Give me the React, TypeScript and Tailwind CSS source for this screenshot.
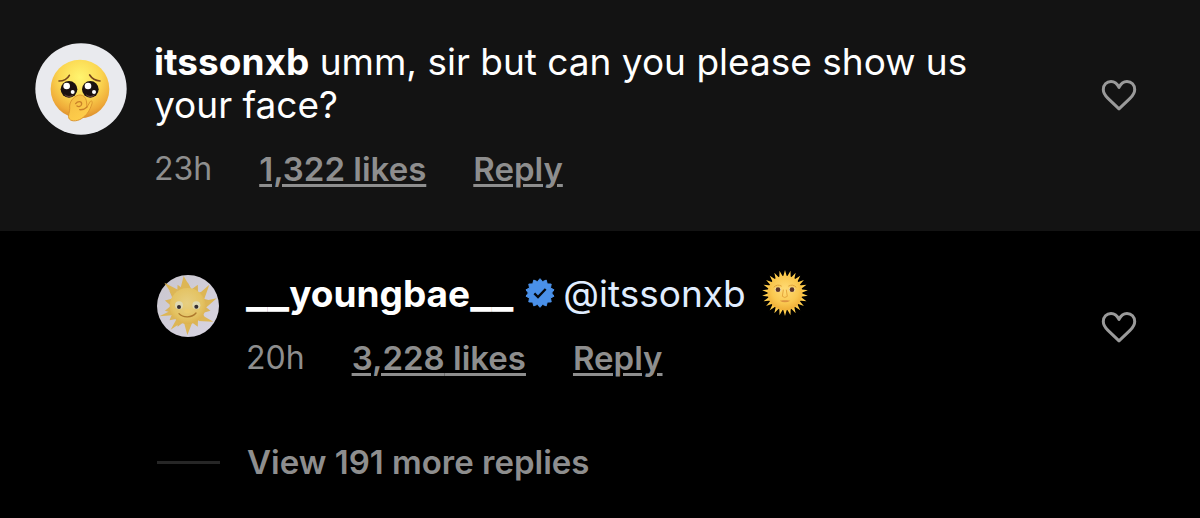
import type { ReactNode } from 'react'

// points of a star with n tips, for rays and the badge edge
function starPoints(n: number, cx: number, cy: number, outer: number, inner: number) {
  const pts: string[] = []
  for (let i = 0; i < n * 2; i++) {
    const r = i % 2 ? inner : outer
    const a = (Math.PI * i) / n - Math.PI / 2
    pts.push(`${(cx + r * Math.cos(a)).toFixed(2)},${(cy + r * Math.sin(a)).toFixed(2)}`)
  }
  return pts.join(' ')
}

function PleadingAvatar() {
  return (
    <svg viewBox="0 0 276 276" className="size-[92px] shrink-0" role="img" aria-label="itssonxb">
      <defs>
        <radialGradient id="face" cx="0.5" cy="0.3" r="0.72">
          <stop offset="0" stopColor="#fff56f" />
          <stop offset="0.5" stopColor="#fbd650" />
          <stop offset="0.82" stopColor="#efab39" />
          <stop offset="1" stopColor="#d98a2b" />
        </radialGradient>
        <linearGradient id="hand" x1="0" y1="0" x2="0.6" y2="1">
          <stop offset="0" stopColor="#f3bb42" />
          <stop offset="1" stopColor="#ffcf4c" />
        </linearGradient>
      </defs>
      <circle cx="138" cy="138" r="137" fill="#e9eaee" />
      <circle cx="135" cy="138" r="88" fill="url(#face)" />
      <path d="M72 114c14 0 25-6 31-17M195 114c-15-1-24-7-31-18" fill="none" stroke="#79471c" strokeWidth="5" strokeLinecap="round" />
      <circle cx="102" cy="139" r="25" fill="#1b1110" />
      <circle cx="166" cy="139" r="25" fill="#1b1110" />
      <path d="M88 153q14 12 28 0q-4 10-14 10t-14-10M152 153q14 12 28 0q-4 10-14 10t-14-10" fill="#654039" />
      <circle cx="95" cy="129" r="10" fill="#fff" />
      <circle cx="159" cy="129" r="10" fill="#fff" />
      <circle cx="113" cy="147" r="6" fill="#fff" />
      <circle cx="177" cy="147" r="6" fill="#fff" />
      <path
        d="M104 189c1-17 17-34 32-33 9 0 16 7 18 17l2 19 9-15c4-7 8-2 6 5-7 21-14 31-25 40-14 13-36 15-43 6-7-10 3-20 1-39z"
        fill="url(#hand)"
        stroke="#dc962f"
        strokeWidth="3"
        strokeLinejoin="round"
      />
      <path d="M122 182c6-8 18-8 18 1-1 8-10 9-14 6M134 200c10 1 16-2 22-8" fill="none" stroke="#c98129" strokeWidth="4" strokeLinecap="round" />
    </svg>
  )
}

function SunAvatar() {
  return (
    <svg viewBox="0 0 186 186" className="size-[62px] shrink-0" role="img" aria-label="__youngbae__">
      <defs>
        <radialGradient id="plush" cx="0.48" cy="0.42" r="0.6">
          <stop offset="0" stopColor="#e7cf82" />
          <stop offset="0.7" stopColor="#e4c363" />
          <stop offset="1" stopColor="#dcb04d" />
        </radialGradient>
        <linearGradient id="wall" x1="0" y1="0" x2="1" y2="1">
          <stop offset="0" stopColor="#c9c6ce" />
          <stop offset="1" stopColor="#d9d5e2" />
        </linearGradient>
      </defs>
      <circle cx="93" cy="93" r="93" fill="url(#wall)" />
      <polygon points={starPoints(14, 92, 92, 70, 50)} fill="#dab45a" />
      <path d="M70 42L80 3l22 38zM48 62L22 23l42 22zM126 56l31-27-16 45zM141 78l38-8-34 30zM44 106L7 124l48-4zM134 120l35 20-45-2zM108 137l-17 43-11-41zM60 130l-19 34 34-23z" fill="#ddb655" />
      <circle cx="92" cy="93" r="54" fill="url(#plush)" />
      <circle cx="66" cy="91" r="12" fill="#dfd9b2" />
      <circle cx="118" cy="91" r="12" fill="#dfd9b2" />
      <circle cx="66" cy="96" r="6" fill="#342d32" />
      <circle cx="118" cy="95" r="6" fill="#342d32" />
      <path d="M66 116c12 13 39 13 51-2" fill="none" stroke="#ad782c" strokeWidth="4" strokeLinecap="round" />
      <ellipse cx="91" cy="109" rx="9" ry="6" fill="#eccb6c" />
    </svg>
  )
}

function SunFace() {
  return (
    <svg viewBox="0 0 138 138" className="size-[46px] shrink-0" role="img" aria-label="sun with face">
      <defs>
        <radialGradient id="sun" cx="0.5" cy="0.4" r="0.6">
          <stop offset="0" stopColor="#ffdc76" />
          <stop offset="0.65" stopColor="#fac850" />
          <stop offset="1" stopColor="#efae38" />
        </radialGradient>
      </defs>
      <polygon points={starPoints(26, 69, 69, 69, 48)} fill="#ffcd4c" />
      <circle cx="69" cy="69" r="52" fill="url(#sun)" />
      <path d="M36 51q10-10 22-3M80 48q12-7 22 3" fill="none" stroke="#dfa03a" strokeWidth="3" strokeLinecap="round" />
      <ellipse cx="48" cy="59" rx="10" ry="7" fill="#f5dca0" />
      <ellipse cx="90" cy="59" rx="10" ry="7" fill="#f5dca0" />
      <circle cx="48" cy="59" r="7" fill="#5a3226" />
      <circle cx="90" cy="59" r="7" fill="#5a3226" />
      <path d="M64 60l-3 19q7 7 15 0l-3-19" fill="none" stroke="#e5a63c" strokeWidth="3" strokeLinecap="round" />
      <path d="M53 92q16 10 32 0-7-2-16-1-9-1-16 1z" fill="#dc9340" />
    </svg>
  )
}

function VerifiedBadge() {
  return (
    <svg viewBox="0 0 90 90" className="size-[30px] shrink-0" role="img" aria-label="Verified">
      <polygon points={starPoints(14, 45, 45, 43, 35)} fill="#4a90e8" stroke="#4a90e8" strokeWidth="3" strokeLinejoin="round" />
      <path d="M28 46l11 11 23-24" fill="none" stroke="#05080d" strokeWidth="7" />
    </svg>
  )
}

function LikeButton() {
  return (
    <button type="button" aria-label="Like" className="block shrink-0">
      <svg viewBox="0 0 36 32" className="h-8 w-9" fill="none" stroke="#9a9a9a" strokeWidth="3" strokeLinejoin="round">
        <path d="M18 8.500C16.200 4.500 13.300 2.500 10 2.500C5.500 2.500 2.300 6 2.300 10.500C2.300 14.200 4.100 16.600 7 19.400L18 29.800L29 19.400C31.900 16.600 33.700 14.200 33.700 10.500C33.700 6 30.500 2.500 26 2.500C22.700 2.500 19.800 4.500 18 8.500Z" />
      </svg>
    </button>
  )
}

function Meta({ age, likes }: { age: string; likes: string }) {
  return (
    <div className="flex items-center gap-[47px] text-[33px] leading-10 text-[#8e8e8e]">
      <span className="text-[32px]">{age}</span>
      <button type="button" className="font-semibold underline decoration-[3px] underline-offset-[3px]">{likes} likes</button>
      <button type="button" className="font-semibold underline decoration-[3px] underline-offset-[3px]">Reply</button>
    </div>
  )
}

function Comment({ avatar, children, className }: { avatar: ReactNode; children: ReactNode; className: string }) {
  return (
    <article className={`flex items-start gap-[27px] pr-[63px] ${className}`}>
      {avatar}
      <div className="min-w-0 flex-1">{children}</div>
      <div className="pt-9">
        <LikeButton />
      </div>
    </article>
  )
}

export default function App() {
  return (
    <main className="min-h-screen bg-black font-['Inter',sans-serif] text-white">
      <Comment avatar={<PleadingAvatar />} className="bg-[#131313] pt-[43px] pb-[42px] pl-[35px]">
        <p className="-mt-[3px] max-w-[840px] text-[37px] leading-[43px]">
          <a href="#itssonxb" className="font-bold">itssonxb</a> umm, sir but can you please show us your face?
        </p>
        <div className="pt-[23px]">
          <Meta age="23h" likes="1,322" />
        </div>
      </Comment>

      <Comment avatar={<SunAvatar />} className="pt-11 pl-[157px]">
        <div className="-mt-[5px] flex h-[46px] items-center text-[37px] leading-[43px]">
          <a href="#youngbae" className="mr-3 font-bold">
            <span className="text-[46px] leading-[0] font-semibold">__</span>youngbae<span className="text-[46px] leading-[0] font-semibold">__</span>
          </a>
          <VerifiedBadge />
          <a href="#itssonxb" className="mr-4 ml-2 text-[#e0edff]">@itssonxb</a>
          <SunFace />
        </div>
        <div className="pt-[22px]">
          <Meta age="20h" likes="3,228" />
        </div>
      </Comment>

      <div className="flex items-center gap-[27px] pt-16 pb-9 pl-[157px]">
        <span className="h-[3px] w-[63px] bg-[#262626]" />
        <button type="button" className="text-[33px] leading-10 font-semibold text-[#8e8e8e]">View 191 more replies</button>
      </div>
    </main>
  )
}
